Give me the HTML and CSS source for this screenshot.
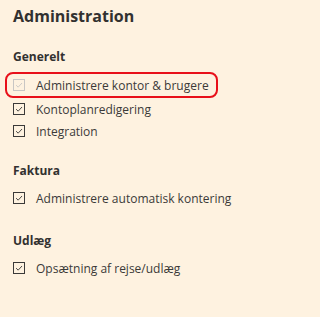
FILE: index.html
```html
<!DOCTYPE html>
<html lang="da">
<head>
<meta charset="utf-8">
<link rel="stylesheet" href="styles.css">
</head>
<body>
<div class="page">
  <h1 class="title">Administration</h1>

  <h2 class="section">Generelt</h2>
  <div class="row row--focus">
    <span class="box box--disabled"><svg viewBox="0 0 12 12"><path d="M2.5 6.2 L5 8.6 L9.6 3.6"/></svg></span>
    <span class="label">Administrere kontor &amp; brugere</span>
  </div>
  <div class="row">
    <span class="box"><svg viewBox="0 0 12 12"><path d="M2.5 6.2 L5 8.6 L9.6 3.6"/></svg></span>
    <span class="label">Kontoplanredigering</span>
  </div>
  <div class="row">
    <span class="box"><svg viewBox="0 0 12 12"><path d="M2.5 6.2 L5 8.6 L9.6 3.6"/></svg></span>
    <span class="label">Integration</span>
  </div>

  <h2 class="section">Faktura</h2>
  <div class="row row--first">
    <span class="box"><svg viewBox="0 0 12 12"><path d="M2.5 6.2 L5 8.6 L9.6 3.6"/></svg></span>
    <span class="label">Administrere automatisk kontering</span>
  </div>

  <h2 class="section section--last">Udlæg</h2>
  <div class="row row--first">
    <span class="box"><svg viewBox="0 0 12 12"><path d="M2.5 6.2 L5 8.6 L9.6 3.6"/></svg></span>
    <span class="label">Opsætning af rejse/udlæg</span>
  </div>
</div>
</body>
</html>
```

FILE: styles.css
```css
html, body {
  margin: 0;
  padding: 0;
  background: #fef2e0;
}
body {
  font-family: "Open Sans", "Noto Sans", sans-serif;
  color: #323130;
  width: 250px;
  height: 317px;
  overflow: hidden;
}
.page {
  padding: 4px 13px 0 13px;
}
.title {
  margin: 0;
  font-size: 16px;
  line-height: 24px;
  font-weight: 700;
  color: #323130;
}
.section {
  margin: 19px 0 5px 0;
  font-size: 12px;
  line-height: 20px;
  font-weight: 700;
  color: #323130;
}
.section + .row--first {
  margin-top: 6px;
}
.section--last {
  margin-top: 22px;
}
.row {
  display: flex;
  align-items: center;
  gap: 11px;
  height: 22px;
}
.row--focus {
  margin-left: -8px;
  padding: 0 7px 0 6px;
  width: max-content;
  height: 22px;
  border: 2px solid #e8101a;
  border-radius: 8px;
}
.box {
  box-sizing: border-box;
  width: 12px;
  height: 12px;
  border: 1px solid #3b3a39;
  display: flex;
}
.box svg {
  width: 10px;
  height: 10px;
}
.box path {
  fill: none;
  stroke: #3b3a39;
  stroke-width: 1.1;
}
.box--disabled {
  border-color: #c8c6c4;
}
.box--disabled path {
  stroke: #c8c6c4;
}
.label {
  font-size: 12px;
  color: #3b3a39;
  white-space: nowrap;
}
```
